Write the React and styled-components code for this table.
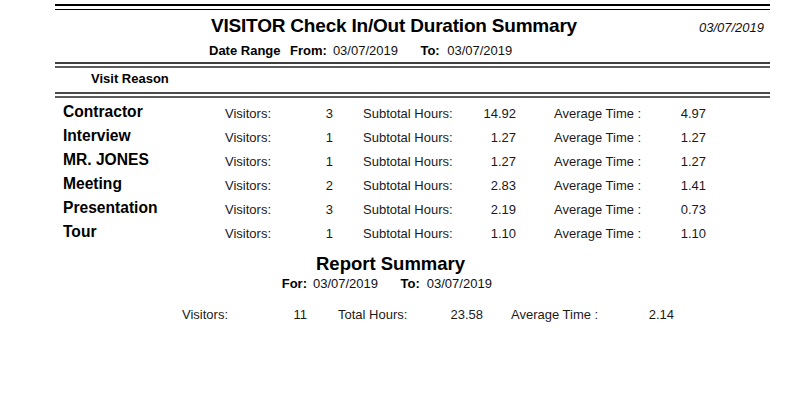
import React from "react";
import styled, { createGlobalStyle } from "styled-components";

const GlobalStyle = createGlobalStyle`
  html, body { margin: 0; padding: 0; background: #ffffff; }
  body { font-family: "Liberation Sans", Arial, sans-serif; color: #000; }
`;

const Page = styled.div`
  width: 800px;
  height: 404px;
  box-sizing: border-box;
  padding: 4px 30px 0 55px;
  overflow: hidden;
`;

const DoubleRule = styled.div`
  margin-top: ${(p) => p.$mt || 0}px;
  height: ${(p) => p.$gap}px;
  border-top: ${(p) => p.$top}px solid ${(p) => p.$color};
  border-bottom: ${(p) => p.$bottom}px solid ${(p) => p.$color2 || p.$color};
`;

const TitleRow = styled.div`
  display: flex;
  align-items: baseline;
  margin-top: 4px;
  padding-left: 156px;
  padding-right: 6px;
  height: 24px;
`;

const Title = styled.h1`
  margin: 0;
  font-size: 19px;
  font-weight: 700;
  letter-spacing: -0.2px;
  line-height: 24px;
  white-space: nowrap;
`;

const PrintDate = styled.span`
  margin-left: auto;
  font-size: 13px;
  font-style: italic;
  line-height: 24px;
  color: #111;
`;

const RangeRow = styled.div`
  display: flex;
  margin-top: ${(p) => p.$mt || 0}px;
  padding-left: ${(p) => p.$indent}px;
  font-size: 13px;
  line-height: 16px;
  white-space: nowrap;
`;

const RangeLabel = styled.span`
  font-weight: 700;
  margin-left: ${(p) => p.$ml || 0}px;
  color: #000;
`;

const RangeValue = styled.span`
  margin-left: ${(p) => p.$ml || 0}px;
  color: #111;
`;

const ColumnHeader = styled.div`
  margin-top: 3px;
  padding-left: 36px;
  font-size: 13px;
  font-weight: 700;
  line-height: 16px;
`;

const Table = styled.div`
  margin-top: 5px;
  display: flex;
  flex-direction: column;
`;

const Row = styled.div`
  display: grid;
  grid-template-columns: ${(p) => p.$cols};
  padding-left: ${(p) => p.$indent}px;
  margin-top: ${(p) => p.$mt || 0}px;
  height: ${(p) => p.$h}px;
  align-items: start;
`;

const Name = styled.div`
  font-size: 15.6px;
  font-weight: 700;
  line-height: 18px;
  white-space: nowrap;
`;

const Cell = styled.div`
  font-size: 13px;
  line-height: ${(p) => p.$lh || 18}px;
  padding-top: ${(p) => p.$pt ?? 2}px;
  padding-left: ${(p) => p.$indent || 0}px;
  text-align: ${(p) => (p.$right ? "right" : "left")};
  color: #1a1a1a;
  white-space: nowrap;
`;

const SummaryTitle = styled.h2`
  margin: 5.6px 0 0;
  padding-left: 261px;
  font-size: 18.5px;
  font-weight: 700;
  line-height: 22px;
  white-space: nowrap;
`;

const rows = [
  ["Contractor", 3, "14.92", "4.97"],
  ["Interview", 1, "1.27", "1.27"],
  ["MR. JONES", 1, "1.27", "1.27"],
  ["Meeting", 2, "2.83", "1.41"],
  ["Presentation", 3, "2.19", "0.73"],
  ["Tour", 1, "1.10", "1.10"],
];

const ROW_COLS = "162px 58px 50px 137px 46px 144px 46px";
const TOTAL_COLS = "75px 50px 113px 63px 117px 74px";

export default function App() {
  return (
    <>
      <GlobalStyle />
      <Page>
        <DoubleRule $top={2} $gap={3} $bottom={1} $color="#000" />
        <TitleRow>
          <Title>VISITOR Check In/Out Duration Summary</Title>
          <PrintDate>03/07/2019</PrintDate>
        </TitleRow>
        <RangeRow $indent={154} $mt={4.5}>
          <RangeLabel>Date Range</RangeLabel>
          <RangeLabel $ml={9.5}>From:</RangeLabel>
          <RangeValue $ml={6}>03/07/2019</RangeValue>
          <RangeLabel $ml={22.5}>To:</RangeLabel>
          <RangeValue $ml={7.5}>03/07/2019</RangeValue>
        </RangeRow>
        <DoubleRule $mt={3.5} $top={2} $gap={2} $bottom={2} $color="#3f3f3f" $color2="#5c5c5c" />
        <ColumnHeader>Visit Reason</ColumnHeader>
        <DoubleRule $mt={5} $top={2} $gap={2} $bottom={2} $color="#4a4a4a" $color2="#5c5c5c" />
        <Table>
          {rows.map(([name, visitors, hours, avg]) => (
            <Row key={name} $cols={ROW_COLS} $indent={8} $h={24}>
              <Name>{name}</Name>
              <Cell>Visitors:</Cell>
              <Cell $right>{visitors}</Cell>
              <Cell $indent={30}>Subtotal Hours:</Cell>
              <Cell $right>{hours}</Cell>
              <Cell $indent={38}>Average Time :</Cell>
              <Cell $right>{avg}</Cell>
            </Row>
          ))}
        </Table>
        <SummaryTitle>Report Summary</SummaryTitle>
        <RangeRow $indent={226.7} $mt={1}>
          <RangeLabel>For:</RangeLabel>
          <RangeValue $ml={6}>03/07/2019</RangeValue>
          <RangeLabel $ml={22.5}>To:</RangeLabel>
          <RangeValue $ml={7}>03/07/2019</RangeValue>
        </RangeRow>
        <Row $cols={TOTAL_COLS} $indent={127} $h={16} $mt={15.5}>
          <Cell $pt={0} $lh={16}>Visitors:</Cell>
          <Cell $pt={0} $lh={16} $right>11</Cell>
          <Cell $pt={0} $lh={16} $indent={31}>Total Hours:</Cell>
          <Cell $pt={0} $lh={16} $right>23.58</Cell>
          <Cell $pt={0} $lh={16} $indent={28}>Average Time :</Cell>
          <Cell $pt={0} $lh={16} $right>2.14</Cell>
        </Row>
      </Page>
    </>
  );
}
